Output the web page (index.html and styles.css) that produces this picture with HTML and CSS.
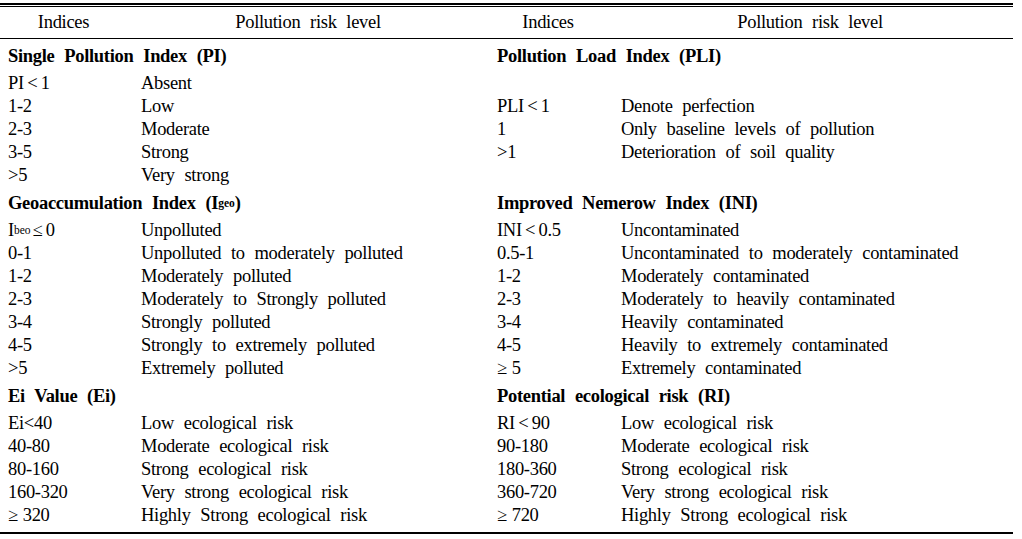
FILE: index.html
```html
<!DOCTYPE html>
<html lang="en">
<head>
<meta charset="utf-8">
<title>Pollution indices</title>
<link rel="stylesheet" href="styles.css">
</head>
<body>
<div class="tbl">
  <div class="head">
    <div class="h c1">Indices</div>
    <div class="h c2">Pollution risk level</div>
    <div class="h c3">Indices</div>
    <div class="h c4">Pollution risk level</div>
  </div>
  <div class="body">
    <div class="sec l">Single Pollution Index (PI)</div>
    <div class="sec r">Pollution Load Index (PLI)</div>

    <div class="k">PI &lt; 1</div><div class="v">Absent</div><div class="k"></div><div class="v"></div>
    <div class="k">1-2</div><div class="v">Low</div><div class="k">PLI &lt; 1</div><div class="v">Denote perfection</div>
    <div class="k">2-3</div><div class="v">Moderate</div><div class="k">1</div><div class="v">Only baseline levels of pollution</div>
    <div class="k">3-5</div><div class="v">Strong</div><div class="k">&gt;1</div><div class="v">Deterioration of soil quality</div>
    <div class="k">&gt;5</div><div class="v">Very strong</div><div class="k"></div><div class="v"></div>

    <div class="sec l">Geoaccumulation Index (I<sub>geo</sub>)</div>
    <div class="sec r">Improved Nemerow Index (INI)</div>

    <div class="k">I<sub class="gap">beo</sub> ≤ 0</div><div class="v">Unpolluted</div><div class="k">INI &lt; 0.5</div><div class="v">Uncontaminated</div>
    <div class="k">0-1</div><div class="v">Unpolluted to moderately polluted</div><div class="k">0.5-1</div><div class="v">Uncontaminated to moderately contaminated</div>
    <div class="k">1-2</div><div class="v">Moderately polluted</div><div class="k">1-2</div><div class="v">Moderately contaminated</div>
    <div class="k">2-3</div><div class="v">Moderately to Strongly polluted</div><div class="k">2-3</div><div class="v">Moderately to heavily contaminated</div>
    <div class="k">3-4</div><div class="v">Strongly polluted</div><div class="k">3-4</div><div class="v">Heavily contaminated</div>
    <div class="k">4-5</div><div class="v">Strongly to extremely polluted</div><div class="k">4-5</div><div class="v">Heavily to extremely contaminated</div>
    <div class="k">&gt;5</div><div class="v">Extremely polluted</div><div class="k wide">≥ 5</div><div class="v">Extremely contaminated</div>

    <div class="sec l">Ei Value (Ei)</div>
    <div class="sec r">Potential ecological risk (RI)</div>

    <div class="k">Ei&lt;40</div><div class="v">Low ecological risk</div><div class="k">RI &lt; 90</div><div class="v">Low ecological risk</div>
    <div class="k">40-80</div><div class="v">Moderate ecological risk</div><div class="k">90-180</div><div class="v">Moderate ecological risk</div>
    <div class="k">80-160</div><div class="v">Strong ecological risk</div><div class="k">180-360</div><div class="v">Strong ecological risk</div>
    <div class="k">160-320</div><div class="v">Very strong ecological risk</div><div class="k">360-720</div><div class="v">Very strong ecological risk</div>
    <div class="k wide">≥ 320</div><div class="v">Highly Strong ecological risk</div><div class="k wide">≥ 720</div><div class="v">Highly Strong ecological risk</div>
  </div>
</div>
</body>
</html>
```
FILE: styles.css
```css
html, body {
  margin: 0;
  padding: 0;
  background: #fff;
}
body {
  font-family: "Liberation Serif", "Times New Roman", serif;
  font-size: 18.5px;
  color: #000;
  letter-spacing: -0.3px;
  word-spacing: 5.4px;
}
.tbl {
  width: 1013px;
  margin-top: 3px;
  border-top: 2px solid #000;
  border-bottom: 2px solid #000;
  padding-bottom: 5px;
}
.head {
  margin-top: 1px;
  border-top: 1px solid #000;
  border-bottom: 1px solid #000;
  display: grid;
  grid-template-columns: 133px 356px 124px 400px;
  height: 31px;
  align-items: center;
}
.h {
  text-align: center;
  padding-right: 6px;
}
.body {
  display: grid;
  grid-template-columns: 133px 356px 124px 400px;
  padding-top: 1px;
}
.sec {
  grid-column: span 2;
  font-weight: bold;
  height: 31.5px;
  display: flex;
  align-items: center;
  padding-left: 8px;
  padding-top: 1px;
  box-sizing: border-box;
}
.k, .v {
  height: 23.1px;
  display: flex;
  align-items: center;
  padding-left: 8px;
  white-space: nowrap;
}
.k {
  word-spacing: -1px;
}
.k.wide {
  word-spacing: 0.5px;
}
sub {
  font-size: 11.5px;
  vertical-align: -4px;
  line-height: 0;
  word-spacing: 0;
  letter-spacing: 0;
}
sub.gap {
  margin-right: 2px;
}
.sec sub {
  font-weight: bold;
}
```
